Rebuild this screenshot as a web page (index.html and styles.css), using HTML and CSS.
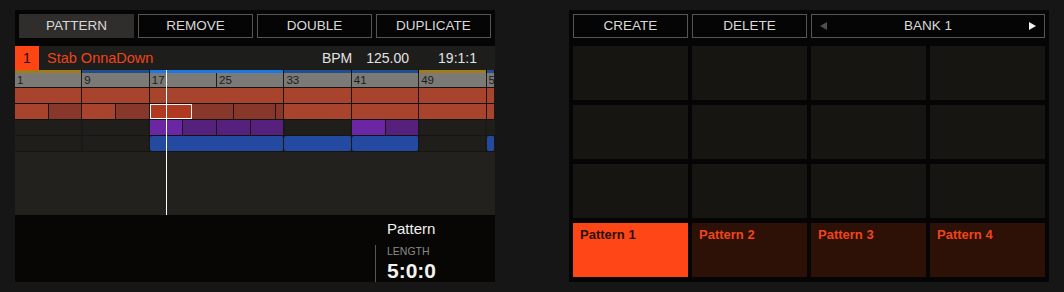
FILE: index.html
```html
<!DOCTYPE html>
<html lang="en">
<head>
    <meta charset="UTF-8">
    <title>Pattern Mode</title>
    <link rel="stylesheet" href="styles.css">
</head>
<body>
    <div class="screens">
        <!-- Left display: arranger -->
        <div class="screen">
            <div class="toolbar">
                <button class="btn btn-active">PATTERN</button>
                <button class="btn">REMOVE</button>
                <button class="btn">DOUBLE</button>
                <button class="btn">DUPLICATE</button>
            </div>

            <div class="track-header">
                <span class="track-num">1</span>
                <span class="track-name">Stab OnnaDown</span>
                <span class="bpm-label">BPM</span>
                <span class="bpm-value">125.00</span>
                <span class="position">19:1:1</span>
            </div>

            <div class="timeline">
                <div class="track-grid strip">
                    <span class="seg gold" style="grid-column: 1 / span 8"></span>
                    <span class="seg blue-dim" style="grid-column: 9 / span 8"></span>
                    <span class="seg blue-lit" style="grid-column: 17 / span 16"></span>
                    <span class="seg blue-dim" style="grid-column: 33 / span 8"></span>
                    <span class="seg blue-dim" style="grid-column: 41 / span 8"></span>
                    <span class="seg gold" style="grid-column: 49 / span 8"></span>
                    <span class="seg blue-dim" style="grid-column: 57 / span 1"></span>
                </div>

                <div class="track-grid ruler">
                    <span class="bar" style="grid-column: 1 / span 8">1</span>
                    <span class="bar" style="grid-column: 9 / span 8">9</span>
                    <span class="bar" style="grid-column: 17 / span 8">17</span>
                    <span class="bar" style="grid-column: 25 / span 8">25</span>
                    <span class="bar" style="grid-column: 33 / span 8">33</span>
                    <span class="bar" style="grid-column: 41 / span 8">41</span>
                    <span class="bar" style="grid-column: 49 / span 8">49</span>
                    <span class="bar" style="grid-column: 57 / span 1">57</span>
                </div>

                <div class="track-grid lane">
                    <span class="clip red" style="grid-column: 1 / span 8"></span>
                    <span class="clip red" style="grid-column: 9 / span 8"></span>
                    <span class="clip red" style="grid-column: 17 / span 16"></span>
                    <span class="clip red" style="grid-column: 33 / span 8"></span>
                    <span class="clip red" style="grid-column: 41 / span 8"></span>
                    <span class="clip red" style="grid-column: 49 / span 8"></span>
                    <span class="clip red" style="grid-column: 57 / span 1"></span>
                </div>

                <div class="track-grid lane">
                    <span class="clip red" style="grid-column: 1 / span 4"></span>
                    <span class="clip red-dark" style="grid-column: 5 / span 4"></span>
                    <span class="clip red" style="grid-column: 9 / span 4"></span>
                    <span class="clip red-dark" style="grid-column: 13 / span 4"></span>
                    <span class="clip selected" style="grid-column: 17 / span 5"></span>
                    <span class="clip red-dark" style="grid-column: 22 / span 5"></span>
                    <span class="clip red-dark" style="grid-column: 27 / span 5"></span>
                    <span class="clip red-dark" style="grid-column: 32 / span 1"></span>
                    <span class="clip red" style="grid-column: 33 / span 8"></span>
                    <span class="clip red" style="grid-column: 41 / span 8"></span>
                    <span class="clip red" style="grid-column: 49 / span 8"></span>
                    <span class="clip red" style="grid-column: 57 / span 1"></span>
                </div>

                <div class="track-grid lane">
                    <span class="clip purple" style="grid-column: 17 / span 4"></span>
                    <span class="clip purple-dark" style="grid-column: 21 / span 4"></span>
                    <span class="clip purple-dark" style="grid-column: 25 / span 4"></span>
                    <span class="clip purple-dark" style="grid-column: 29 / span 4"></span>
                    <span class="clip purple" style="grid-column: 41 / span 4"></span>
                    <span class="clip purple-dark" style="grid-column: 45 / span 4"></span>
                </div>

                <div class="track-grid lane">
                    <span class="clip blue" style="grid-column: 17 / span 16"></span>
                    <span class="clip blue" style="grid-column: 33 / span 8"></span>
                    <span class="clip blue" style="grid-column: 41 / span 8"></span>
                    <span class="clip blue" style="grid-column: 57 / span 1"></span>
                </div>

                <div class="timeline-empty"></div>
                <div class="playhead"></div>
            </div>

            <div class="info-area">
                <div class="info">
                    <div class="info-title">Pattern</div>
                    <div class="info-param">
                        <div class="param-label">LENGTH</div>
                        <div class="param-value">5:0:0</div>
                    </div>
                </div>
            </div>
        </div>

        <!-- Right display: pattern pads -->
        <div class="screen">
            <div class="toolbar">
                <button class="btn">CREATE</button>
                <button class="btn">DELETE</button>
                <button class="btn btn-bank">
                    <svg width="7" height="8" viewBox="0 0 7 8"><polygon points="7,0 7,8 0,4" fill="#4f4f4d"/></svg>
                    <span>BANK 1</span>
                    <svg width="7" height="8" viewBox="0 0 7 8"><polygon points="0,0 0,8 7,4" fill="#f2f2f2"/></svg>
                </button>
            </div>

            <div class="pads">
                <div class="pad"></div>
                <div class="pad"></div>
                <div class="pad"></div>
                <div class="pad"></div>
                <div class="pad"></div>
                <div class="pad"></div>
                <div class="pad"></div>
                <div class="pad"></div>
                <div class="pad"></div>
                <div class="pad"></div>
                <div class="pad"></div>
                <div class="pad"></div>
                <div class="pad pad-active">Pattern 1</div>
                <div class="pad pad-used">Pattern 2</div>
                <div class="pad pad-used">Pattern 3</div>
                <div class="pad pad-used">Pattern 4</div>
            </div>
        </div>
    </div>
</body>
</html>
```

FILE: styles.css
```css
body {
    margin: 0;
    padding: 10px 15px;
    background-color: #161616;
    font-family: "Liberation Sans", Arial, sans-serif;
}

.screens {
    display: flex;
    gap: 74px;
}

.screen {
    width: 480px;
    height: 272px;
    background-color: #050505;
    display: flex;
    flex-direction: column;
    overflow: hidden;
}

/* Button row on top of each display */
.toolbar {
    display: grid;
    grid-template-columns: repeat(4, 1fr);
    gap: 4px;
    padding: 4px 4px 0;
    margin-bottom: 8px;
}

.btn {
    height: 24px;
    padding: 0;
    background-color: #050505;
    border: 1px solid #555553;
    color: #d9d9d9;
    font-family: inherit;
    font-size: 13.5px;
    line-height: 22px;
}

.btn-active {
    background-color: #2f2e2c;
    border-color: #2f2e2c;
}

.btn-bank {
    grid-column: span 2;
    display: flex;
    align-items: center;
    justify-content: space-between;
    padding: 0 8px;
}

/* Track header */
.track-header {
    height: 24px;
    display: flex;
    align-items: center;
    background-color: #1d1d1b;
    font-size: 14px;
    color: #e2e2e2;
}

.track-num {
    width: 24px;
    height: 24px;
    line-height: 24px;
    text-align: center;
    background-color: #ff4514;
    color: #1a0b04;
}

.track-name {
    margin-left: 8px;
    font-size: 14.5px;
    color: #ef4419;
}

.bpm-label {
    margin-left: auto;
    margin-right: 14px;
}

.bpm-value {
    margin-right: 29px;
}

.position {
    margin-right: 18px;
}

/* Arranger timeline */
.timeline {
    position: relative;
    background-color: #141412;
}

.track-grid {
    display: grid;
    grid-template-columns: repeat(57, 1fr);
}

.strip {
    height: 3px;
    background-color: #050505;
}

.seg {
    border-right: 1px solid #050505;
}

.gold { background-color: #a17c1c; }
.blue-dim { background-color: #1f4f8f; }
.blue-lit { background-color: #1a77e4; }

.ruler {
    height: 14px;
    margin-bottom: 1px;
}

.bar {
    background-color: #7b7a77;
    border-right: 1px solid #1c1c1a;
    padding-left: 2px;
    font-size: 11.5px;
    line-height: 14px;
    color: #1c1c1c;
    overflow: hidden;
    white-space: nowrap;
}

.lane {
    height: 15px;
    margin-bottom: 1px;
    background-color: #1f1e1b;
    background-image: linear-gradient(to right, transparent calc(100% - 1px), #141412 0);
    background-size: calc(100% * 8 / 57) 100%;
}

.clip {
    border-right: 1px solid #1a1715;
}

.red { background-color: #a8442d; }
.red-dark { background-color: #87382a; }
.purple { background-color: #6b27a3; }
.purple-dark { background-color: #56217d; }

.blue {
    background-color: #2449a0;
    border-radius: 2px;
}

.selected {
    background-color: #b1391f;
    border: 1px solid #f4f4f4;
}

.timeline-empty {
    height: 63px;
    background-color: #22211e;
}

.playhead {
    position: absolute;
    left: 151px;
    top: 0;
    bottom: 0;
    width: 1px;
    background-color: #ffffff;
}

/* Parameter area under the timeline */
.info-area {
    flex: 1;
    display: flex;
    justify-content: flex-end;
    background-color: #070604;
}

.info {
    width: 120px;
    padding-top: 5px;
}

.info-title {
    padding-left: 12px;
    font-size: 15px;
    line-height: 17px;
    color: #f0f0f0;
}

.info-param {
    margin-top: 8px;
    padding-left: 11px;
    border-left: 1px solid #555553;
}

.param-label {
    font-size: 10.5px;
    line-height: 12px;
    color: #8a8a88;
}

.param-value {
    margin-top: 3px;
    font-size: 21px;
    font-weight: bold;
    line-height: 22px;
    color: #f2f2f2;
}

/* Pattern pads */
.pads {
    display: grid;
    grid-template-columns: repeat(4, 1fr);
    grid-template-rows: repeat(4, 54px);
    gap: 5px 4px;
    padding: 0 4px;
}

.pad {
    background-color: #161511;
    padding: 4px 7px;
    font-size: 13px;
    font-weight: bold;
    line-height: 15px;
}

.pad-active {
    background-color: #ff4616;
    color: #2a1207;
}

.pad-used {
    background-color: #2d1006;
    color: #f0451a;
}
```
